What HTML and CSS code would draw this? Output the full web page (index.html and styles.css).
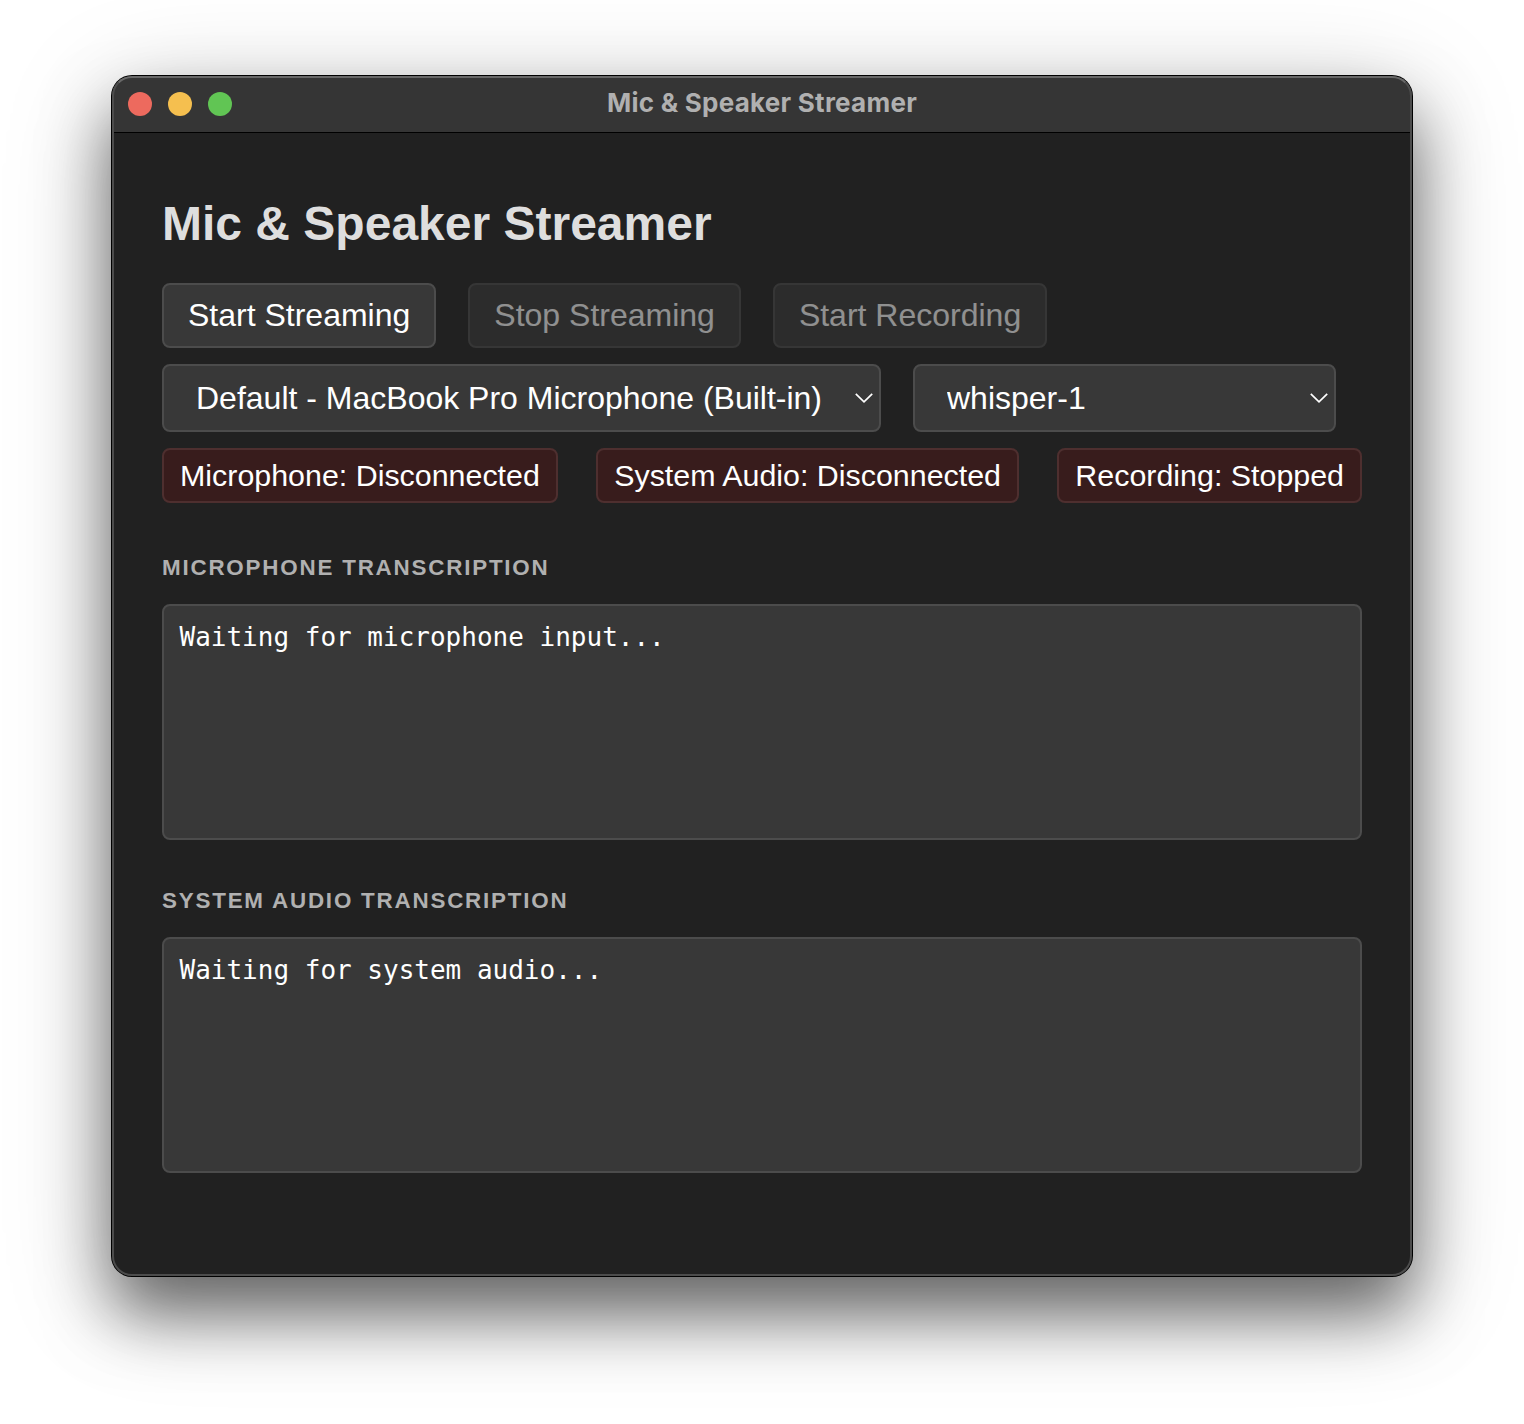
FILE: index.html
```html
<!DOCTYPE html>
<html lang="en">
<head>
<meta charset="utf-8">
<title>Mic &amp; Speaker Streamer</title>
<link rel="stylesheet" href="styles.css">
</head>
<body>
<div class="window">
  <header class="titlebar">
    <div class="lights">
      <span class="light close"></span>
      <span class="light minimize"></span>
      <span class="light maximize"></span>
    </div>
    <div class="window-title">Mic &amp; Speaker Streamer</div>
  </header>
  <main class="content">
    <h1>Mic &amp; Speaker Streamer</h1>
    <div class="row buttons">
      <button type="button">Start Streaming</button>
      <button type="button" disabled>Stop Streaming</button>
      <button type="button" disabled>Start Recording</button>
    </div>
    <div class="row selects">
      <div class="select device">
        <select><option>Default - MacBook Pro Microphone (Built-in)</option></select>
        <svg class="chevron" viewBox="0 0 18 10"><path d="M.8.8L9 8.8L17.2.8"/></svg>
      </div>
      <div class="select model">
        <select><option>whisper-1</option></select>
        <svg class="chevron" viewBox="0 0 18 10"><path d="M.8.8L9 8.8L17.2.8"/></svg>
      </div>
    </div>
    <div class="row statuses">
      <div class="status">Microphone: Disconnected</div>
      <div class="status">System Audio: Disconnected</div>
      <div class="status">Recording: Stopped</div>
    </div>
    <div class="transcripts">
      <section>
        <h2>Microphone Transcription</h2>
        <div class="transcript">Waiting for microphone input...</div>
      </section>
      <section>
        <h2>System Audio Transcription</h2>
        <div class="transcript">Waiting for system audio...</div>
      </section>
    </div>
  </main>
</div>
</body>
</html>
```
FILE: styles.css
```css
* { box-sizing: border-box; }

body {
  margin: 0;
  padding: 76px 112px 148px;
  background: #fff;
  font-family: "Liberation Sans", Arial, sans-serif;
  color: #fff;
  overflow: hidden;
}

.window {
  position: relative;
  height: 1200px;
  border-radius: 20px;
  background: #212121;
  box-shadow: 0 0 0 1px #000, 0 38px 66px rgba(0, 0, 0, .53), 0 22px 110px rgba(0, 0, 0, .22);
}

/* Light inner rim drawn above the title bar and content */
.window::after {
  content: "";
  position: absolute;
  inset: 0;
  border: 2px solid #4c4c4c;
  border-top-color: #686868;
  border-radius: 20px;
  pointer-events: none;
}

.titlebar {
  display: grid;
  grid-template-columns: 200px 1fr 200px;
  align-items: center;
  height: 57px;
  border-bottom: 1px solid #000;
  border-radius: 20px 20px 0 0;
  background: #353535;
}

.lights {
  display: flex;
  gap: 16px;
  padding-left: 16px;
}

.light {
  width: 24px;
  height: 24px;
  border-radius: 50%;
}

.close { background: #ed6a5e; }
.minimize { background: #f5bf4f; }
.maximize { background: #61c554; }

.window-title {
  margin-top: -2px;
  text-align: center;
  font: 700 26px/32px Inter, sans-serif;
  letter-spacing: .25px;
  color: #b0b0b0;
}

.content { padding: 63px 50px 0; }

h1 {
  margin: 0 0 32px;
  font-size: 48px;
  line-height: 55px;
  color: #dedede;
}

.row { display: flex; }

.buttons { gap: 32px; }

button {
  height: 65px;
  padding: 0 24px;
  border: 2px solid #4c4c4c;
  border-radius: 8px;
  background: #383838;
  color: #fff;
  font: 32px/37px "Liberation Sans", Arial, sans-serif;
}

button:disabled { opacity: .5; }

.selects {
  gap: 32px;
  margin-top: 16px;
}

.select { position: relative; }
.device { width: 719px; }
.model { width: 423px; }

select {
  display: block;
  appearance: none;
  width: 100%;
  height: 68px;
  padding: 0 32px;
  border: 2px solid #4c4c4c;
  border-radius: 8px;
  background: #383838;
  color: #fff;
  font: 32px/37px "Liberation Sans", Arial, sans-serif;
}

.chevron {
  position: absolute;
  top: 29px;
  right: 8px;
  width: 18px;
  height: 10px;
  fill: none;
  stroke: #fff;
  stroke-width: 1.7;
  pointer-events: none;
}

.statuses {
  justify-content: space-between;
  margin-top: 16px;
}

.status {
  height: 55px;
  padding: 8px 16px;
  border: 2px solid #4e2f2f;
  border-radius: 8px;
  background: #381c1c;
  font-size: 30.4px;
  line-height: 35px;
  white-space: nowrap;
}

.transcripts {
  display: flex;
  flex-direction: column;
  gap: 45px;
  padding-top: 49px;
}

h2 {
  margin: 0 0 20px;
  font-size: 22.4px;
  line-height: 32px;
  letter-spacing: 1.79px;
  text-transform: uppercase;
  color: #b0b0b0;
}

.transcript {
  height: 236px;
  padding: 16px 15.5px;
  border: 2px solid #4c4c4c;
  border-radius: 8px;
  background: #383838;
  font: 26px/31px "DejaVu Sans Mono", monospace;
}
```
